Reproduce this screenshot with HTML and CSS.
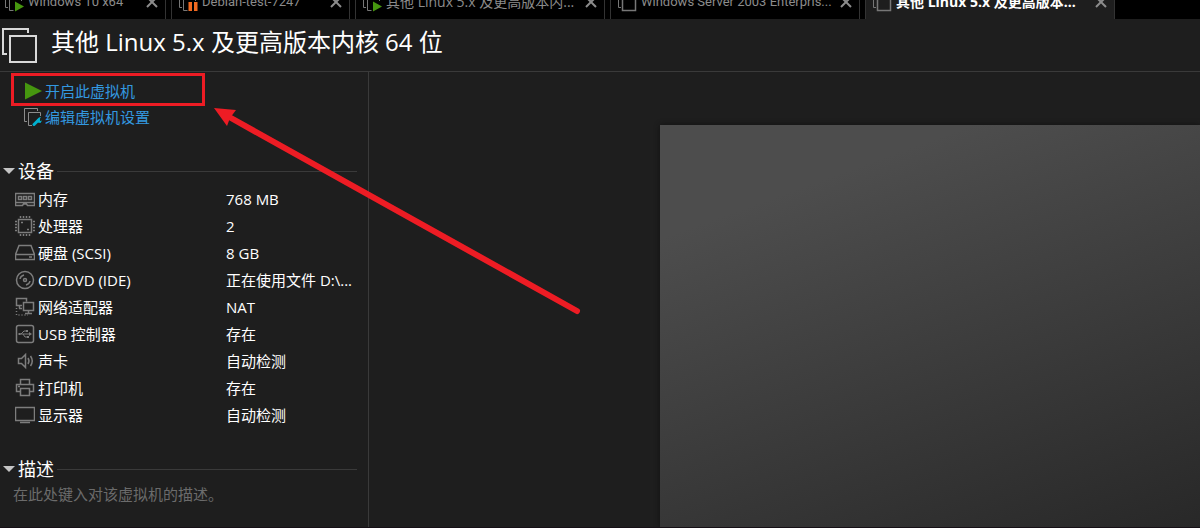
FILE: index.html
```html
<!DOCTYPE html>
<html lang="zh-CN">
<head>
<meta charset="utf-8">
<title>其他 Linux 5.x 及更高版本内核 64 位</title>
<link rel="stylesheet" href="styles.css">
</head>
<body>
<svg class="defs" aria-hidden="true">
  <symbol id="close" viewBox="0 0 12 12"><path d="M1 1l10 10M11 1L1 11" fill="none" stroke="#8c8c8c" stroke-width="2"/></symbol>
  <symbol id="vm" viewBox="0 0 20 20"><path d="M4 15.500H1.500V1.500H14V4" fill="none" stroke="#777"/><rect x="5.500" y="5.500" width="13" height="13" fill="none" stroke="#777" stroke-width="1.500"/></symbol>
  <symbol id="vm-on" viewBox="0 0 20 20"><path d="M4 15.500H1.500V1.500H14V4M9.500 18.500H5.500V5.500H17.500V9" fill="none" stroke="#777"/><path d="M11 9.500l9 5-9 5z" fill="#46960f"/></symbol>
  <symbol id="vm-paused" viewBox="0 0 20 20"><path d="M4 15.500H1.500V1.500H14V4M9.500 18.500H5.500V5.500H17.500V9" fill="none" stroke="#777"/><path d="M10.500 10h3.500v9h-3.500zM16 10h3.500v9H16z" fill="#f26a21"/></symbol>
</svg>
<nav class="tabs" aria-label="虚拟机">
  <div class="tab tab-latin tab-first"><svg class="icon"><use href="#vm-on"/></svg><span class="tab-name">Windows 10 x64</span><button class="close" aria-label="关闭"><svg><use href="#close"/></svg></button></div>
  <div class="tab tab-latin tab-short"><svg class="icon"><use href="#vm-paused"/></svg><span class="tab-name">Debian-test-7247</span><button class="close" aria-label="关闭"><svg><use href="#close"/></svg></button></div>
  <div class="tab"><svg class="icon"><use href="#vm-on"/></svg><span class="tab-name">其他 Linux 5.x 及更高版本内...</span><button class="close" aria-label="关闭"><svg><use href="#close"/></svg></button></div>
  <div class="tab tab-latin"><svg class="icon"><use href="#vm"/></svg><span class="tab-name">Windows Server 2003 Enterpris...</span><button class="close" aria-label="关闭"><svg><use href="#close"/></svg></button></div>
  <div class="tab tab-active"><svg class="icon"><use href="#vm"/></svg><span class="tab-name">其他 Linux 5.x 及更高版本...</span><button class="close" aria-label="关闭"><svg><use href="#close"/></svg></button></div>
</nav>
<header class="header">
  <svg class="header-icon" viewBox="0 0 36 36" fill="none" stroke="#d9d9d9" stroke-width="2"><path d="M6 27H2V2H27V6"/><rect x="9" y="9" width="26" height="26"/></svg>
  <h1 class="title">其他 Linux 5.x 及更高版本内核 64 位</h1>
</header>
<main class="main">
  <aside class="sidebar">
    <div class="actions">
      <a class="action action-marked" href="#power"><svg class="action-icon" viewBox="0 0 18 18"><path d="M1 .5L18 9 1 17.500z" fill="#46960f"/></svg>开启此虚拟机</a>
      <a class="action" href="#settings"><svg class="action-icon" viewBox="0 0 18 18"><path d="M3 13.500H.5V.5H13.500V3M8 17.500H4.500V4.500H16.500V8" fill="none" stroke="#8c8c8c"/><path d="M10 16.500l4.500-4.500" stroke="#00b1d0" stroke-width="3" stroke-linecap="round"/><path d="M17 9l-2 .5-2 2 .5 3 3 .5 1.500-2.500-2 .5-.5-1.500z" fill="#00b1d0"/></svg>编辑虚拟机设置</a>
    </div>
    <section class="section">
      <h2 class="heading"><svg class="caret" viewBox="0 0 12 6"><path d="M0 0h12L6 6z" fill="#c4c4c4"/></svg>设备</h2>
      <table class="devices">
        <tr><th scope="row"><span class="device"><svg class="icon glyph" viewBox="0 0 20 20"><path d="M.5 4.500h19v12h-7l-1-1.500h-3l-1 1.500h-7zM3.500 7.500h3v3h-3zM8.500 7.500h3v3h-3zM13.500 7.500h3v3h-3zM1 13.500h18"/></svg>内存</span></th><td>768 MB</td></tr>
        <tr><th scope="row"><span class="device"><svg class="icon glyph" viewBox="0 0 20 20"><path d="M3.500 3.500h13v13h-13zM5.500 0v2M8.500 0v2M11.500 0v2M14.500 0v2M5.500 18v2M8.500 18v2M11.500 18v2M14.500 18v2M0 5.500h2M0 8.500h2M0 11.500h2M0 14.500h2M18 5.500h2M18 8.500h2M18 11.500h2M18 14.500h2M6 6.500h2M12 13.500h2"/></svg>处理器</span></th><td>2</td></tr>
        <tr><th scope="row"><span class="device"><svg class="icon glyph" viewBox="0 0 20 20"><path d="M.5 11.500L4 2.500h12l3.500 9v5H.5v-5h19M14 14h3"/></svg>硬盘 (SCSI)</span></th><td>8 GB</td></tr>
        <tr><th scope="row"><span class="device"><svg class="icon glyph" viewBox="0 0 20 20"><circle cx="10" cy="10" r="8.500"/><circle cx="10" cy="10" r="1.500"/><path d="M5 9q.5-3 4-4M15 11q-.5 3-4 4"/></svg>CD/DVD (IDE)</span></th><td>正在使用文件 D:\...</td></tr>
        <tr><th scope="row"><span class="device"><svg class="icon glyph" viewBox="0 0 20 20"><path d="M7 8.500H1.500v-7h10v3M4 11.500h3M4.500 8.500v3M8.500 5.500h10v8h-10zM13.500 13.500v3M10 16.500h7"/><path d="M1.500 11v7H13" stroke-dasharray="1 2"/></svg>网络适配器</span></th><td>NAT</td></tr>
        <tr><th scope="row"><span class="device"><svg class="icon glyph" viewBox="0 0 20 20"><rect x="1.500" y="1.500" width="17" height="17" rx="2"/><path d="M4 10h10M6 10l3-3h2M8 10l2 3h2" stroke-width="1"/><path d="M14 8l3 2-3 2zM3.500 9h2v2h-2zM11 6h2v2h-2zM12 12h2v2h-2z" fill="#7d7d7d" stroke="none"/></svg>USB 控制器</span></th><td>存在</td></tr>
        <tr><th scope="row"><span class="device"><svg class="icon glyph" viewBox="0 0 20 20"><path d="M3.500 7.500h3L10.500 3.500v13l-4-4h-3zM13 7q2 3 0 6M15.500 5q3.500 5 0 10"/></svg>声卡</span></th><td>自动检测</td></tr>
        <tr><th scope="row"><span class="device"><svg class="icon glyph" viewBox="0 0 20 20"><path d="M5.500 6.500v-5h9v5M5 13.500H1.500v-7h17v7H15M5.500 10.500h9v7h-9zM3 8.500h2"/></svg>打印机</span></th><td>存在</td></tr>
        <tr><th scope="row"><span class="device"><svg class="icon glyph" viewBox="0 0 20 20"><path d="M.5 2.500h19v13H.5zM5 17.500h10"/></svg>显示器</span></th><td>自动检测</td></tr>
      </table>
    </section>
    <section class="section">
      <h2 class="heading"><svg class="caret" viewBox="0 0 12 6"><path d="M0 0h12L6 6z" fill="#c4c4c4"/></svg>描述</h2>
      <textarea class="description" rows="1" aria-label="描述" placeholder="在此处键入对该虚拟机的描述。"></textarea>
    </section>
  </aside>
  <div class="preview"><div class="screen"></div></div>
</main>
<svg class="arrow" viewBox="0 0 370 210" aria-hidden="true"><path d="M17 10L363 203" stroke="#ed1c24" stroke-width="6" stroke-linecap="round"/><path d="M0 0l22 2-6 8-3 8z" fill="#ed1c24"/></svg>
</body>
</html>
```

FILE: styles.css
```css
* { box-sizing: border-box; }

body {
  margin: 0;
  height: 100vh;
  display: flex;
  flex-direction: column;
  overflow: hidden;
  border-bottom: 1px solid #161016;
  background: #1e1e1e;
  color: #fff;
  font: 15px/20px "Open Sans", "Noto Sans CJK SC", sans-serif;
}

svg { display: block; flex: none; }
.defs { position: absolute; width: 0; height: 0; }
.icon { width: 20px; height: 20px; }
.glyph { fill: none; stroke: #7d7d7d; stroke-width: 1.5; }

/* Tab strip, scrolled partly under the top edge */
.tabs {
  display: flex;
  align-items: flex-end;
  gap: 5px;
  flex: none;
  height: 19px;
  margin-left: -3px;
  overflow: hidden;
  background: #000;
}
.tab {
  display: flex;
  align-items: center;
  flex: 0 1 250px;
  min-width: 0;
  height: 34px;
  padding: 0 7px 0 6px;
  border: solid #333;
  border-width: 0 1px;
  color: #8c8c8c;
  font-size: 14px;
}
.tab-latin { font-family: Roboto, "Noto Sans CJK SC", sans-serif; font-size: 13px; }
.tab-first { flex-basis: 169px; }
.tab-short { flex-basis: 179px; }
.tab-active { background: #1e1e1e; color: #fff; font-weight: 700; }
.tab-name { flex: 1; min-width: 0; margin-left: 4px; white-space: nowrap; }
.close { padding: 0; border: 0; background: none; }
.close svg { width: 12px; height: 12px; }

.header {
  display: flex;
  align-items: center;
  gap: 14px;
  flex: none;
  height: 53px;
  padding-left: 1px;
  border-bottom: 1px solid #3a3a3a;
}
.header-icon { width: 36px; height: 36px; }
.title { margin: 0 0 6px; font-size: 24px; line-height: 32px; font-weight: 400; }

.main { display: flex; flex: 1; min-height: 0; }
.sidebar { flex: 0 0 369px; border-right: 1px solid #3a3a3a; overflow: hidden; }

.actions { display: flex; flex-direction: column; align-items: flex-start; padding: 1px 11px 2px; }
.action {
  display: flex;
  align-items: center;
  gap: 3px;
  padding: 1px 13px;
  color: #3399e0;
  text-decoration: none;
}
.action-marked { width: 194px; height: 33px; padding: 2px 10px 0; border: 3px solid #ed1c24; }
.action-icon { width: 18px; height: 18px; }

.section { padding: 29px 11px 0 3px; }
.heading {
  display: flex;
  align-items: center;
  gap: 3px;
  margin: 0 0 2px;
  font-size: 18px;
  line-height: 24px;
  font-weight: 400;
}
.heading::after { content: ""; flex: 1; height: 1px; background: #3a3a3a; }
.caret { width: 12px; height: 6px; }

.devices { width: 100%; table-layout: fixed; border-collapse: collapse; }
.devices th { width: 223px; padding: 0 0 0 12px; font-weight: 400; text-align: left; }
.devices td { height: 27px; padding: 0; white-space: nowrap; }
.device { display: flex; align-items: center; gap: 3px; }

.description {
  display: block;
  width: 100%;
  padding: 1px 10px 0;
  border: 0;
  background: none;
  color: #fff;
  font: inherit;
  resize: none;
  overflow: hidden;
}
.description::placeholder { color: #6b6b6b; opacity: 1; }

.preview { display: flex; flex: 1; padding: 53px 0 0 291px; overflow: hidden; }
.screen {
  flex: 1;
  background: linear-gradient(160deg, #4d4d4d 19%, #282828);
  box-shadow: 0 0 5px #111;
}

/* Callout drawn over the window */
.arrow { position: absolute; left: 214px; top: 108px; width: 370px; height: 210px; pointer-events: none; }
```
